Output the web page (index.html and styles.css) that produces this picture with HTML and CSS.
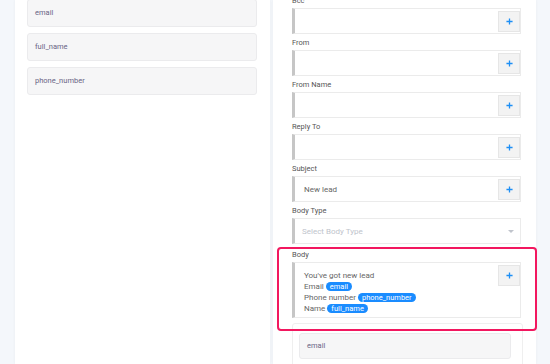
FILE: index.html
```html
<!DOCTYPE html>
<html lang="en">
<head>
    <meta charset="UTF-8">
    <title>Email action</title>
    <link rel="stylesheet" href="styles.css">
</head>
<body>
    <div class="layout">
        <aside class="panel fields-panel">
            <div class="field-list">
                <div class="field-item">email</div>
                <div class="field-item">full_name</div>
                <div class="field-item">phone_number</div>
            </div>
        </aside>

        <section class="panel form-panel">
            <div class="form">
                <div class="group">
                    <label>Bcc</label>
                    <div class="input">
                        <span class="value"></span>
                        <button class="add"><svg viewBox="0 0 8 8"><path d="M4 0.5v7M0.5 4h7" stroke="#1e8ff5" stroke-width="1.5" fill="none"/></svg></button>
                    </div>
                </div>
                <div class="group">
                    <label>From</label>
                    <div class="input">
                        <span class="value"></span>
                        <button class="add"><svg viewBox="0 0 8 8"><path d="M4 0.5v7M0.5 4h7" stroke="#1e8ff5" stroke-width="1.5" fill="none"/></svg></button>
                    </div>
                </div>
                <div class="group">
                    <label>From Name</label>
                    <div class="input">
                        <span class="value"></span>
                        <button class="add"><svg viewBox="0 0 8 8"><path d="M4 0.5v7M0.5 4h7" stroke="#1e8ff5" stroke-width="1.5" fill="none"/></svg></button>
                    </div>
                </div>
                <div class="group">
                    <label>Reply To</label>
                    <div class="input">
                        <span class="value"></span>
                        <button class="add"><svg viewBox="0 0 8 8"><path d="M4 0.5v7M0.5 4h7" stroke="#1e8ff5" stroke-width="1.5" fill="none"/></svg></button>
                    </div>
                </div>
                <div class="group">
                    <label>Subject</label>
                    <div class="input">
                        <span class="value">New lead</span>
                        <button class="add"><svg viewBox="0 0 8 8"><path d="M4 0.5v7M0.5 4h7" stroke="#1e8ff5" stroke-width="1.5" fill="none"/></svg></button>
                    </div>
                </div>
                <div class="group">
                    <label>Body Type</label>
                    <div class="input select">
                        <span class="value placeholder">Select Body Type</span>
                        <span class="caret"></span>
                    </div>
                </div>
                <div class="group body-group">
                    <label>Body</label>
                    <div class="input textarea">
                        <div class="value">
                            <div>You've got new lead</div>
                            <div>Email <span class="tag">email</span></div>
                            <div>Phone number <span class="tag">phone_number</span></div>
                            <div>Name <span class="tag">full_name</span></div>
                        </div>
                        <button class="add"><svg viewBox="0 0 8 8"><path d="M4 0.5v7M0.5 4h7" stroke="#1e8ff5" stroke-width="1.5" fill="none"/></svg></button>
                    </div>
                </div>
                <div class="sub-card">
                    <div class="field-item">email</div>
                </div>
            </div>
            <div class="highlight"></div>
        </section>
    </div>
</body>
</html>
```

FILE: styles.css
```css
body {
    margin: 0;
    background-color: #f4f7fb;
    font-family: Roboto, "Liberation Sans", sans-serif;
    overflow: hidden;
    height: 364px;
}
.layout {
    display: flex;
    gap: 3px;
    padding-left: 15px;
    height: 364px;
}
.panel {
    background-color: #fff;
    box-shadow: 0 0 3px rgba(0, 0, 0, 0.05);
}
.fields-panel {
    width: 255px;
}
.field-list {
    display: flex;
    flex-direction: column;
    gap: 6px;
    margin: -1px 13px 0 12px;
}
.field-item {
    height: 26px;
    line-height: 26px;
    padding-left: 7px;
    background-color: #f6f6f7;
    border: 1px solid #ebebed;
    border-radius: 3px;
    font-size: 7.5px;
    color: #6a6585;
}
.form-panel {
    width: 263px;
    position: relative;
}
.form {
    margin-top: -6px;
    padding: 0 15px 0 19px;
}
.group {
    margin-bottom: 2px;
}
.group label {
    display: block;
    height: 14px;
    line-height: 14px;
    font-size: 7.5px;
    color: #555;
}
.input {
    display: flex;
    align-items: center;
    justify-content: space-between;
    height: 26px;
    box-sizing: border-box;
    border: 1px solid #ebebeb;
    border-left: 3px solid #c6c6c6;
}
.value {
    padding-left: 9px;
    font-size: 8px;
    color: #666;
}
.placeholder {
    padding-left: 7px;
    color: #c0c4cc;
}
.add {
    width: 22px;
    height: 21px;
    padding: 0;
    background-color: #f3f3f3;
    border: 1px solid #e6e6e6;
    display: flex;
    align-items: center;
    justify-content: center;
}
.add svg {
    width: 7px;
    height: 7px;
    display: block;
}
.caret {
    width: 0;
    height: 0;
    margin-right: 6px;
    border-left: 3px solid transparent;
    border-right: 3px solid transparent;
    border-top: 3px solid #c0c4cc;
}
.body-group {
    margin-top: 4px;
}
.textarea {
    height: 56px;
    align-items: flex-start;
}
.textarea .value {
    padding-top: 7px;
    line-height: 11px;
}
.textarea .add {
    margin-top: 2px;
}
.tag {
    display: inline-block;
    height: 9px;
    line-height: 9px;
    padding: 0 4px;
    border-radius: 5px;
    background-color: #1a8cff;
    color: #fff;
    font-size: 7.5px;
}
.sub-card {
    margin-top: 5px;
    margin-right: -2px;
    border: 1px solid #efefef;
    border-radius: 3px;
    padding: 9px 11px 10px 6px;
}
.sub-card .field-item {
    height: 24px;
    line-height: 24px;
}
.highlight {
    position: absolute;
    left: 4px;
    top: 247px;
    width: 256px;
    height: 80px;
    border: 2px solid #f2175f;
    border-radius: 4px;
}
```
